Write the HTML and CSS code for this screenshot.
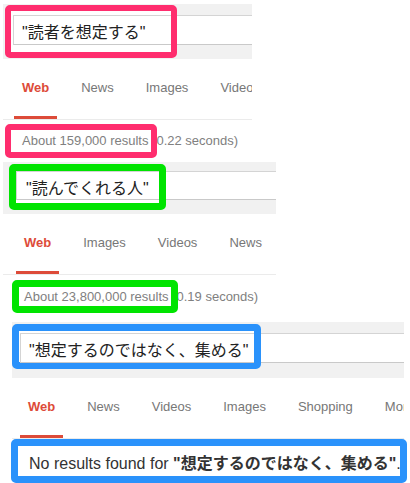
FILE: index.html
```html
<!DOCTYPE html>
<html lang="ja">
<head>
<meta charset="utf-8">
<title>Search comparisons</title>
<link rel="stylesheet" href="styles.css">
</head>
<body>
  <section class="shot s1">
    <div class="band">
      <div class="input"></div>
      <div class="mark pink"><div class="field">"読者を想定する"</div></div>
    </div>
    <nav class="tabs">
      <span class="tab active">Web</span>
      <span class="tab">News</span>
      <span class="tab">Images</span>
      <span class="tab">Videos</span>
    </nav>
    <div class="stats">About 159,000 results (0.22 seconds)
      <div class="mark pink"></div>
    </div>
  </section>

  <section class="shot s2">
    <div class="band">
      <div class="input"></div>
      <div class="mark green"><div class="field">"読んでくれる人"</div></div>
    </div>
    <nav class="tabs">
      <span class="tab active">Web</span>
      <span class="tab">Images</span>
      <span class="tab">Videos</span>
      <span class="tab">News</span>
    </nav>
    <div class="stats">About 23,800,000 results (0.19 seconds)
      <div class="mark green"></div>
    </div>
  </section>

  <section class="shot s3">
    <div class="band">
      <div class="input"></div>
      <div class="mark blue"><div class="field">"想定するのではなく、集める"</div></div>
    </div>
    <nav class="tabs">
      <span class="tab active">Web</span>
      <span class="tab">News</span>
      <span class="tab">Videos</span>
      <span class="tab">Images</span>
      <span class="tab">Shopping</span>
      <span class="tab">More</span>
    </nav>
    <div class="stats">No results found for <b>"想定するのではなく、集める"</b>.
      <div class="mark blue"></div>
    </div>
  </section>
</body>
</html>
```

FILE: styles.css
```css
html, body {
  margin: 0;
  padding: 0;
  background: #fff;
}
body {
  padding-top: 4px;
  font-family: "Liberation Sans", Arial, "Noto Sans CJK JP", sans-serif;
}

.shot {
  position: relative;
}
.s1 { margin-left: 3px; width: 249px; }
.s2 { margin-left: 3px; width: 273px; }
.s3 { margin-left: 12px; width: 392px; }

/* search band */
.band {
  position: relative;
  background: #f1f1f1;
  box-sizing: border-box;
}
.input {
  box-sizing: border-box;
  background: #fff;
  border: 1px solid #d4d4d4;
  border-right: 0;
  border-bottom-color: #c9c9c9;
}
.field {
  box-sizing: border-box;
  border: 1px solid #d4d4d4;
  border-right: 0;
  border-bottom-color: #c9c9c9;
  display: flex;
  align-items: center;
  font-size: 16px;
  color: #222;
  white-space: nowrap;
  padding-top: 2px;
}

/* highlight marks */
.mark {
  position: absolute;
  box-sizing: border-box;
  border: 7px solid;
  border-radius: 5px;
}
.band .mark { background: #fff; }
.pink { border-color: #ff2d6e; border-width: 6px; }
.green { border-color: #00e400; }
.blue { border-color: #2a92fb; }

/* tabs */
.tabs {
  display: flex;
  overflow: hidden;
  white-space: nowrap;
  border-bottom: 1px solid #ebebeb;
  font-size: 13px;
  line-height: 16px;
  color: #777;
}
.tab {
  flex: none;
  padding: 21px 8px 20px;
  margin-right: 16px;
  border-bottom: 3px solid transparent;
}
.tab.active {
  color: #dd4b39;
  font-weight: bold;
  border-bottom-color: #dd4b39;
}

/* stats */
.stats {
  position: relative;
  box-sizing: border-box;
  font-size: 13px;
  line-height: 16px;
  color: #808080;
  white-space: nowrap;
}

/* panel 1 */
.s1 .band { height: 55px; padding-top: 11px; }
.s1 .input { height: 30px; margin-left: 10px; }
.s1 .band .mark { top: 1px; left: 2px; width: 172px; height: 53px; }
.s1 .field { height: 30px; margin: 4px 0 0 2px; padding-left: 8px; }
.s1 .tab:first-child { margin-left: 11px; }
.s1 .stats { height: 42px; padding: 13px 0 0 19px; }
.s1 .stats .mark { top: 4px; left: 2px; width: 152px; height: 34px; }

/* panel 2 */
.s2 .band { height: 52px; padding-top: 9px; }
.s2 .input { height: 29px; margin-left: 13px; }
.s2 .band .mark { top: 2px; left: 6px; width: 157px; height: 46px; }
.s2 .field { height: 29px; margin: 0; padding-left: 9px; }
.s2 .tab:first-child { margin-left: 13px; }
.s2 .stats { height: 47px; padding: 14px 0 0 21px; }
.s2 .stats .mark { top: 5px; left: 9px; width: 166px; height: 33px; }

/* panel 3 */
.s3 .band { height: 56px; padding-top: 11px; }
.s3 .input { height: 30px; margin-left: 8px; }
.s3 .band .mark { top: 2px; left: 0; width: 249px; height: 45px; }
.s3 .field { height: 30px; margin: 2px 0 0 1px; padding-left: 8px; }
.s3 .tab:first-child { margin-left: 8px; }
.s3 .stats { height: 45px; padding: 15px 0 0 17px; font-size: 16px; line-height: 20px; color: #333; }
.s3 .stats b { color: #333; }
.s3 .stats .mark { top: 0; left: -1px; width: 396px; height: 44px; }
```
